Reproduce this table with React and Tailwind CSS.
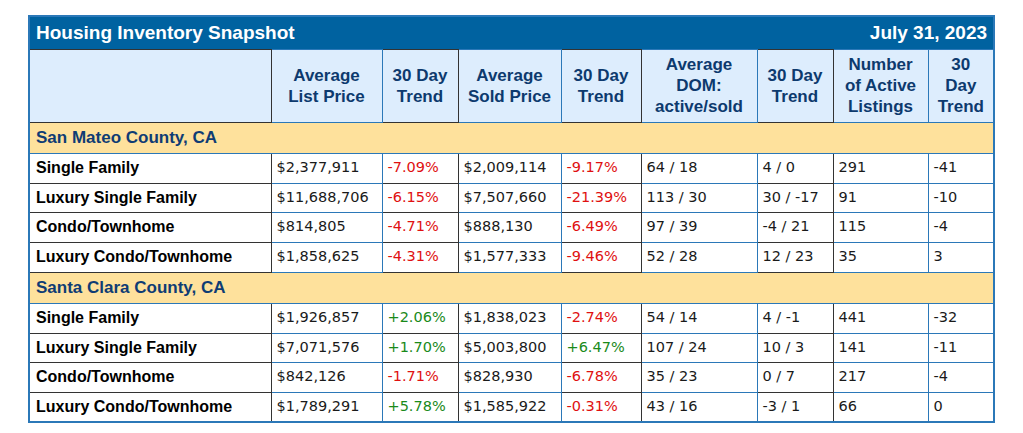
import React from "react";

const blue = "border-[#2b78b8]";
const dark = "border-[#333333]";

// which columns get a dark right border
const darkRight = [true, false, true, false, true, false, true, false, false];

const headers = [
  "",
  "Average\nList Price",
  "30 Day\nTrend",
  "Average\nSold Price",
  "30 Day\nTrend",
  "Average\nDOM:\nactive/sold",
  "30 Day\nTrend",
  "Number\nof Active\nListings",
  "30\nDay\nTrend",
];

const widths = [242, 111, 76, 103, 80, 116, 76, 95, 66];

const sections = [
  {
    name: "San Mateo County, CA",
    rows: [
      ["Single Family", "$2,377,911", "-7.09%", "$2,009,114", "-9.17%", "64 / 18", "4 / 0", "291", "-41"],
      ["Luxury Single Family", "$11,688,706", "-6.15%", "$7,507,660", "-21.39%", "113 / 30", "30 / -17", "91", "-10"],
      ["Condo/Townhome", "$814,805", "-4.71%", "$888,130", "-6.49%", "97 / 39", "-4 / 21", "115", "-4"],
      ["Luxury Condo/Townhome", "$1,858,625", "-4.31%", "$1,577,333", "-9.46%", "52 / 28", "12 / 23", "35", "3"],
    ],
  },
  {
    name: "Santa Clara County, CA",
    rows: [
      ["Single Family", "$1,926,857", "+2.06%", "$1,838,023", "-2.74%", "54 / 14", "4 / -1", "441", "-32"],
      ["Luxury Single Family", "$7,071,576", "+1.70%", "$5,003,800", "+6.47%", "107 / 24", "10 / 3", "141", "-11"],
      ["Condo/Townhome", "$842,126", "-1.71%", "$828,930", "-6.78%", "35 / 23", "0 / 7", "217", "-4"],
      ["Luxury Condo/Townhome", "$1,789,291", "+5.78%", "$1,585,922", "-0.31%", "43 / 16", "-3 / 1", "66", "0"],
    ],
  },
];

const rowHeights = ["h-[30px]", "h-[29px]", "h-[30px]", "h-[30px]"];

function trendClass(v) {
  if (v.startsWith("+")) return "text-[#1a8a1a]";
  return "text-[#e01010]";
}

export default function App() {
  return (
    <div className="bg-white w-[1023px] h-[433px] pt-[15px] pl-[28px]">
      <table
        className={`table-fixed border-collapse border-2 ${blue} w-[965px]`}
        style={{ fontFamily: '"Liberation Sans", Arial, sans-serif' }}
      >
        <colgroup>
          {widths.map((w, i) => (
            <col key={i} style={{ width: w }} />
          ))}
        </colgroup>
        <thead>
          <tr className="h-[33px] bg-[#0062a0]">
            <th colSpan={9} className="p-0">
              <div className="flex items-center justify-between px-[6px] text-white font-bold text-[19px] leading-none">
                <span>Housing Inventory Snapshot</span>
                <span>July 31, 2023</span>
              </div>
            </th>
          </tr>
          <tr className="h-[73px] bg-[#ddedfd]">
            {headers.map((h, i) => (
              <th
                key={i}
                className={`border-t border-b ${blue} ${
                  i < 8 ? `border-r ${darkRight[i] ? dark : blue}` : ""
                } text-center align-middle font-bold text-[17px] leading-[21px] text-[#0d3a6e] whitespace-pre-line px-1`}
              >
                {h}
              </th>
            ))}
          </tr>
        </thead>
        <tbody>
          {sections.map((s) => (
            <React.Fragment key={s.name}>
              <tr className="h-[31px] bg-[#fee19c]">
                <td
                  colSpan={9}
                  className={`border-t border-b ${blue} px-[6px] font-bold text-[17px] text-[#0f3c74]`}
                >
                  {s.name}
                </td>
              </tr>
              {s.rows.map((r, ri) => (
                <tr key={ri} className={`${rowHeights[ri]} bg-white`}>
                  {r.map((c, ci) => (
                    <td
                      key={ci}
                      className={`border-t border-b ${blue} ${
                        ci < 8 ? `border-r ${darkRight[ci] ? dark : blue}` : ""
                      } ${
                        ci === 0
                          ? "px-[6px] font-bold text-[16px] text-black"
                          : `px-[5px] text-[14.5px] ${
                              ci === 2 || ci === 4 ? trendClass(c) : "text-[#1a1a1a]"
                            }`
                      } whitespace-nowrap`}
                      style={ci === 0 ? undefined : { fontFamily: '"DejaVu Sans", Verdana, sans-serif' }}
                    >
                      {c}
                    </td>
                  ))}
                </tr>
              ))}
            </React.Fragment>
          ))}
        </tbody>
      </table>
    </div>
  );
}
